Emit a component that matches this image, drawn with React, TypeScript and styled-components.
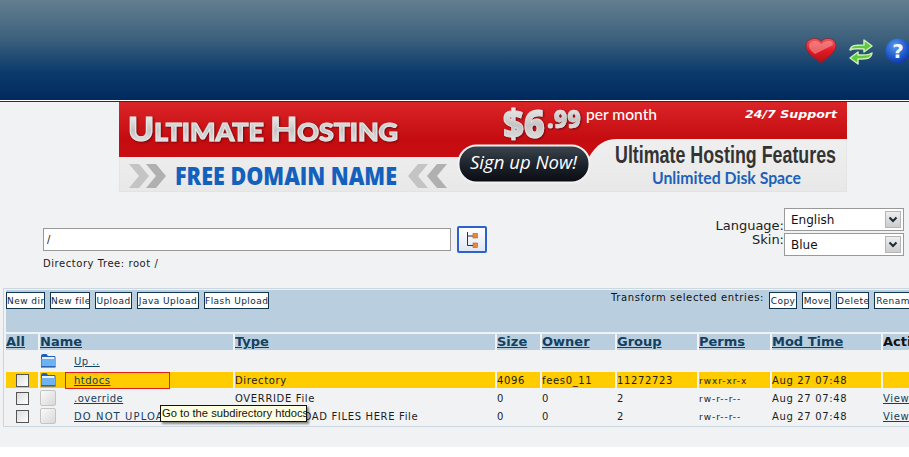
import React from "react";
import styled, { createGlobalStyle } from "styled-components";

const Global = createGlobalStyle`
  html, body { margin: 0; padding: 0; background: #fff; overflow: hidden; }
  body { font-family: "DejaVu Sans", Verdana, sans-serif; font-size: 10px; color: #1a1a1a; }
`;

const Page = styled.div`
  width: 909px;
  height: 447px;
  background: #f1f2f4;
  overflow: hidden;
  position: relative;
`;

const Header = styled.header`
  height: 100px;
  background: linear-gradient(#637f8f 0%, #3b5f7c 40%, #0b3a6c 72%, #002a5e 100%);
  display: flex;
  justify-content: flex-end;
  align-items: flex-start;
  gap: 10px;
  padding-top: 37px;
  box-sizing: border-box;
  margin-right: -2px;
`;

const HeaderRule = styled.div`
  height: 1px;
  background: #fff;
`;

const HeaderShade = styled.div`
  height: 1px;
  background: #17324f;
`;

const BannerSlot = styled.div`
  margin-left: 119px;
  width: 728px;
  height: 90px;
  display: block;
`;

const ToolsRow = styled.section`
  display: flex;
  justify-content: space-between;
  height: 96px;
  padding: 16px 5px 0 43px;
  box-sizing: border-box;
`;

const PathColumn = styled.div`
  padding-top: 18px;
`;

const PathLine = styled.div`
  display: flex;
  align-items: center;
  gap: 6px;
`;

const PathInput = styled.input`
  width: 408px;
  height: 23px;
  box-sizing: border-box;
  border: 1px solid #999;
  background: #fff;
  padding: 0 3px;
  font: 10px "DejaVu Sans", sans-serif;
  color: #111;
`;

const TreeButton = styled.button`
  width: 30px;
  height: 27px;
  padding: 0;
  box-sizing: border-box;
  border: 2px solid #2f62c8;
  border-radius: 2px;
  background: linear-gradient(#fff, #dfe6f5);
  display: flex;
  align-items: center;
  justify-content: center;
`;

const TreePath = styled.div`
  margin-top: 4px;
  font-size: 10px;
  line-height: 13px;
  letter-spacing: 0.55px;
`;

const PrefsGrid = styled.div`
  display: grid;
  grid-template-columns: auto 120px;
  grid-auto-rows: 23px;
  row-gap: 2px;
  align-items: start;
`;

const PrefLabel = styled.label<{ $offset: number }>`
  text-align: right;
  font-size: 13px;
  line-height: 15px;
  color: #222;
  margin-top: ${(p) => p.$offset}px;
`;

const SelectWrap = styled.div`
  position: relative;
  height: 23px;
`;

const Select = styled.select`
  appearance: none;
  width: 100%;
  height: 100%;
  box-sizing: border-box;
  border: 1px solid #999;
  border-radius: 0;
  background: #fff;
  padding: 0 6px;
  font: 12px "DejaVu Sans", sans-serif;
  color: #111;
`;

const SelectArrow = styled.span`
  position: absolute;
  top: 3px;
  right: 3px;
  width: 16px;
  height: 17px;
  box-sizing: border-box;
  border: 1px solid #b5b5b5;
  background: linear-gradient(#eee, #ccc);
  display: flex;
  align-items: center;
  justify-content: center;
`;

const Panel = styled.section`
  width: 960px;
  margin-left: 3px;
  border: 1px solid #ccd6de;
  border-right: 0;
  background: #f1f2f4;
  overflow: hidden;
`;

const FileTable = styled.table`
  table-layout: fixed;
  width: 956px;
  border-collapse: separate;
  border-spacing: 2px;
  margin-top: -1px;
  font-size: 10px;
  letter-spacing: 0.65px;
`;

const ToolbarCell = styled.td`
  background: #b9cfdf;
  height: 42px;
  padding: 0;
  vertical-align: top;
`;

const Toolbar = styled.div`
  display: grid;
  grid-template-columns: 605px auto;
  padding-top: 2px;
`;

const ToolGroup = styled.div`
  display: flex;
  align-items: flex-start;
  gap: 5px;
`;

const TransformLabel = styled.span`
  line-height: 11px;
  white-space: nowrap;
  color: #111;
  letter-spacing: 0.62px;
`;

const ToolButton = styled.button<{ $width: number }>`
  width: ${(p) => p.$width}px;
  height: 17px;
  flex: none;
  box-sizing: border-box;
  padding: 0;
  border: 1px solid #0f3550;
  border-radius: 0;
  background: #fff;
  font: 9px "DejaVu Sans", sans-serif;
  letter-spacing: 0.45px;
  color: #10283a;
  white-space: nowrap;
  overflow: hidden;
`;

const HeadCell = styled.th<{ $link?: boolean }>`
  background: #b9cfdf;
  height: 16px;
  padding: 0;
  text-align: left;
  font-size: 13px;
  line-height: 16px;
  font-weight: bold;
  letter-spacing: 0;
  color: ${(p) => (p.$link ? "#14405f" : "#111")};
  text-decoration: ${(p) => (p.$link ? "underline" : "none")};
  white-space: nowrap;
  overflow: hidden;
`;

const Row = styled.tr<{ $active?: boolean; $height?: number }>`
  height: ${(p) => p.$height ?? 16}px;
  & > td {
    background: ${(p) => (p.$active ? "#ffcc00" : "transparent")};
  }
`;

const Cell = styled.td<{ $small?: boolean }>`
  padding: 2px 0 0;
  line-height: 14px;
  white-space: nowrap;
  color: #1c1c1c;
  font-size: ${(p) => (p.$small ? 9 : 10)}px;
  letter-spacing: ${(p) => (p.$small ? "0.95px" : "inherit")};
`;

const NameCell = styled(Cell)`
  padding: 0;
  line-height: 16px;
`;

const CheckCell = styled(NameCell)`
  padding-left: 10px;
`;

const CheckBox = styled.span`
  display: block;
  box-sizing: border-box;
  width: 13px;
  height: 13px;
  border: 1px solid #555;
  background: linear-gradient(135deg, #dcdcdc, #fff);
  margin-top: 1px;
`;

const NameWrap = styled.div`
  display: flex;
  align-items: center;
  height: 16px;
`;

const IconSlot = styled.span`
  width: 16px;
  height: 16px;
  flex: none;
  display: block;
`;

const FileIcon = styled.span`
  display: block;
  width: 16px;
  height: 16px;
  border: 1px solid #c4c4c4;
  border-radius: 2px;
  background: linear-gradient(135deg, #fafafa, #d8d8d8);
  box-sizing: border-box;
`;

const EntryLink = styled.a<{ $focused?: boolean; $wide?: boolean }>`
  display: block;
  box-sizing: border-box;
  margin-left: ${(p) => (p.$focused ? 9 : 18)}px;
  width: ${(p) => (p.$focused ? "105px" : "auto")};
  height: ${(p) => (p.$focused ? "17px" : "16px")};
  padding-left: ${(p) => (p.$focused ? 8 : 0)}px;
  border: ${(p) => (p.$focused ? "1px solid #e0201c" : "0")};
  line-height: ${(p) => (p.$focused ? "15px" : "18px")};
  color: #14405f;
  text-decoration: underline;
  letter-spacing: ${(p) => (p.$wide ? "1.1px" : "0.5px")};
  position: relative;
  white-space: nowrap;
`;

const ActionLink = styled.a`
  color: #14405f;
  text-decoration: underline;
`;

const Tooltip = styled.div`
  position: absolute;
  left: 160px;
  top: 405px;
  width: 147px;
  height: 17px;
  box-sizing: border-box;
  border: 1px solid #111;
  background: #ffffe1;
  box-shadow: 2px 2px 2px rgba(0, 0, 0, 0.45);
  font: 11.2px/15px "Liberation Sans", sans-serif;
  color: #111;
  padding-left: 1px;
  white-space: nowrap;
  overflow: hidden;
`;

const Heart = () => (
  <svg width="32" height="28" viewBox="0 0 32 28">
    <defs>
      <linearGradient id="heartFill" x1="0" y1="0" x2="0" y2="1">
        <stop offset="0" stopColor="#ee5a5e" />
        <stop offset="0.5" stopColor="#e01a24" />
        <stop offset="1" stopColor="#b00f18" />
      </linearGradient>
    </defs>
    <path d="M16 26 C9 21 1 15 1 9 C1 4 5 1.500 10 1.500 C13 1.500 15 3 16 4.500 C18 2.500 20 1.500 23 1.500 C28 1.500 31 4.500 31 9 C31 15 22 21 16 26Z" fill="url(#heartFill)" stroke="#8c2030" strokeWidth="0.8" />
    <path d="M4 9 C4 5 8 3.500 11 4 C14 4.500 15 6 16 7 C18 5 21 3.500 25 4 C27 4.500 28 6 28 8 L10 17 C6 14 4 12 4 9Z" fill="#f7a0a0" opacity="0.55" />
  </svg>
);

const SyncArrows = () => (
  <svg width="28" height="30" viewBox="0 0 28 30" fill="none">
    <path d="M3 13 C4 8 8 8 17 8 L17 3 L25 9 L17 15 L17 12 C11 12 7 11 3 13Z" fill="#5ec93c" strokeWidth="1.500" stroke="#cdeeb8" strokeLinejoin="round" />
    <path d="M25 16 C24 22 20 22 11 22 L11 27 L3 21 L11 15 L11 18 C17 18 21 19 25 16Z" fill="#5ec93c" strokeWidth="1.500" stroke="#cdeeb8" strokeLinejoin="round" />
  </svg>
);

const HelpBall = () => (
  <svg width="26" height="28" viewBox="0 0 26 28">
    <defs>
      <radialGradient id="helpFill" cx="0.4" cy="0.3" r="0.8">
        <stop offset="0" stopColor="#5a9af0" />
        <stop offset="0.6" stopColor="#1c55c9" />
        <stop offset="1" stopColor="#0c2f94" />
      </radialGradient>
    </defs>
    <circle cx="13" cy="14" r="12.500" fill="url(#helpFill)" />
    <text x="13" y="21" textAnchor="middle" fontFamily="DejaVu Sans" fontWeight="bold" fontSize="20" fill="#f4f8ff">?</text>
  </svg>
);

const BigFolder = () => (
  <svg width="16" height="16" viewBox="0 0 16 16">
    <path d="M1 3 C1 1.800 2 1 3 1 L6.500 1 L8 3 L14 3 C15 3 15.500 3.500 15.500 4.500 L15.500 14 L1 14Z" fill="#1f5fc4" />
    <path d="M1.500 6 L15 6 L15 13.500 L1.500 13.500Z" fill="#6fb2f2" />
    <path d="M2 4 L14.500 4 L14.500 6 L2 6Z" fill="#e7f2fd" />
    <path d="M1 14 L15.500 14" stroke="#14428f" strokeWidth="1" />
  </svg>
);

const TreeGlyph = () => (
  <svg width="16" height="17" viewBox="0 0 16 17" fill="none">
    <path d="M3.500 1 L3.500 14.500 L9 14.500 M3.500 5 L9 5" stroke="#333" strokeWidth="1" />
    <rect x="9" y="2.500" width="4.500" height="4.500" fill="#e8883a" stroke="#b9601c" strokeWidth="0.6" />
    <rect x="9" y="12" width="4.500" height="4.500" fill="#e8883a" stroke="#b9601c" strokeWidth="0.6" />
  </svg>
);

const Chevron = () => (
  <svg width="10" height="7" viewBox="0 0 10 7" fill="none">
    <path d="M1.500 1.500 L5 5 L8.500 1.500" stroke="#1b2b3a" strokeWidth="2" />
  </svg>
);

/* Hosting advertisement shown under the page header */
const HostingAd = () => (
  <svg width="728" height="90" viewBox="0 0 728 90" style={{ display: "block" }}>
    <defs>
      <linearGradient id="adRed" x1="0" y1="0" x2="0" y2="1">
        <stop offset="0" stopColor="#d92428" />
        <stop offset="0.7" stopColor="#c40c10" />
        <stop offset="1" stopColor="#c90d12" />
      </linearGradient>
      <linearGradient id="adSilver" x1="0" y1="0" x2="0" y2="1">
        <stop offset="0" stopColor="#ffffff" />
        <stop offset="0.55" stopColor="#c4c4c4" />
        <stop offset="1" stopColor="#f2f2f2" />
      </linearGradient>
      <linearGradient id="adPill" x1="0" y1="0" x2="0" y2="1">
        <stop offset="0" stopColor="#3d4650" />
        <stop offset="0.5" stopColor="#1e242c" />
        <stop offset="1" stopColor="#090b10" />
      </linearGradient>
      <linearGradient id="adGrey" x1="0" y1="0" x2="0" y2="1">
        <stop offset="0" stopColor="#f4f4f4" />
        <stop offset="1" stopColor="#e8e8e8" />
      </linearGradient>
      <filter id="adShadow" x="-5%" y="-20%" width="110%" height="150%">
        <feDropShadow dx="1" dy="1" stdDeviation="1" floodColor="#5a0608" floodOpacity="0.8" />
      </filter>
    </defs>
    <rect x="0" y="0" width="728" height="90" fill="url(#adGrey)" stroke="#dcdcdc" strokeWidth="0.8" />
    <path d="M0 0 L728 0 L728 37 L498 37 C486 37 478 42 470 55 L0 55Z" fill="url(#adRed)" />
    <g filter="url(#adShadow)">
      <text x="9" y="39" fontFamily="Lato" fontWeight="900" fill="url(#adSilver)" stroke="#e4e4e4" strokeWidth="1.100" textLength="270" lengthAdjust="spacingAndGlyphs">
        <tspan fontSize="32">U</tspan><tspan fontSize="24.5">LTIMATE </tspan><tspan fontSize="32">H</tspan><tspan fontSize="24.5">OSTING</tspan>
      </text>
      <text x="384" y="36" fontFamily="Open Sans" fontWeight="800" fontSize="38" fill="url(#adSilver)" stroke="#e4e4e4" strokeWidth="0.8" textLength="42" lengthAdjust="spacingAndGlyphs">$6</text>
      <text x="428" y="26" fontFamily="Open Sans" fontWeight="800" fontSize="25" fill="url(#adSilver)" stroke="#e4e4e4" strokeWidth="0.4" textLength="34" lengthAdjust="spacingAndGlyphs">.99</text>
    </g>
    <g fill="#c4c4c4">
      <path d="M10 62 L20 62 L30 74 L20 86 L10 86 L20 74Z" />
      <path d="M27 62 L37 62 L47 74 L37 86 L27 86 L37 74Z" fill="#b0b0b0" />
      <path d="M309 62 L299 62 L289 74 L299 86 L309 86 L299 74Z" />
      <path d="M328 62 L318 62 L308 74 L318 86 L328 86 L318 74Z" fill="#b0b0b0" />
    </g>
    <text x="56" y="83" fontFamily="Open Sans" fontWeight="800" fontSize="25" fill="#1460bd" textLength="222" lengthAdjust="spacingAndGlyphs">FREE DOMAIN NAME</text>
    <rect x="339.500" y="43.500" width="131" height="37" rx="18" fill="url(#adPill)" stroke="#f2f2f2" strokeWidth="2" />
    <text x="351" y="67" fontFamily="Open Sans" fontStyle="italic" fontWeight="400" fontSize="19" fill="#fff" textLength="107" lengthAdjust="spacingAndGlyphs">Sign up Now!</text>
    <text x="467" y="18" fontFamily="Lato" fontWeight="500" fontSize="15" fill="#fff" textLength="71" lengthAdjust="spacingAndGlyphs">per month</text>
    <text x="626" y="16" fontFamily="DejaVu Sans" fontStyle="italic" fontWeight="bold" fontSize="11" fill="#fff" textLength="92" lengthAdjust="spacingAndGlyphs">24/7 Support</text>
    <text x="496" y="61" fontFamily="Liberation Sans" fontWeight="bold" fontSize="23" fill="#333" textLength="221" lengthAdjust="spacingAndGlyphs">Ultimate Hosting Features</text>
    <text x="533" y="82" fontFamily="Lato" fontWeight="700" fontSize="17" fill="#1b62b8" textLength="149" lengthAdjust="spacingAndGlyphs">Unlimited Disk Space</text>
  </svg>
);

type Entry = {
  name: string;
  type: string;
  size: string;
  owner: string;
  group: string;
  perms: string;
  view?: boolean;
  folder?: boolean;
  active?: boolean;
  wide?: boolean;
};

const entries: Entry[] = [
  { name: "htdocs", type: "Directory", size: "4096", owner: "fees0_11", group: "11272723", perms: "rwxr-xr-x", folder: true, active: true },
  { name: ".override", type: "OVERRIDE File", size: "0", owner: "0", group: "2", perms: "rw-r--r--", view: true },
  { name: "DO NOT UPLOAD FILES HERE", type: "DO NOT UPLOAD FILES HERE File", size: "0", owner: "0", group: "2", perms: "rw-r--r--", view: true, wide: true },
];

const leftTools: [string, number][] = [
  ["New dir", 39],
  ["New file", 40],
  ["Upload", 37],
  ["Java Upload", 62],
  ["Flash Upload", 65],
];
const rightTools: [string, number][] = [
  ["Copy", 28],
  ["Move", 29],
  ["Delete", 33],
  ["Rename", 44],
];
const columns = ["Size", "Owner", "Group", "Perms", "Mod Time"];

export default function App() {
  return (
    <Page>
      <Global />
      <Header>
        <Heart />
        <SyncArrows />
        <HelpBall />
      </Header>
      <HeaderRule />
      <HeaderShade />
      <BannerSlot>
        <HostingAd />
      </BannerSlot>
      <ToolsRow>
        <PathColumn>
          <PathLine>
            <PathInput defaultValue="/" />
            <TreeButton aria-label="Browse tree">
              <TreeGlyph />
            </TreeButton>
          </PathLine>
          <TreePath>Directory Tree: root /</TreePath>
        </PathColumn>
        <PrefsGrid>
          <PrefLabel $offset={10}>Language:</PrefLabel>
          <SelectWrap>
            <Select defaultValue="English">
              <option>English</option>
            </Select>
            <SelectArrow>
              <Chevron />
            </SelectArrow>
          </SelectWrap>
          <PrefLabel $offset={-1}>Skin:</PrefLabel>
          <SelectWrap>
            <Select defaultValue="Blue">
              <option>Blue</option>
            </Select>
            <SelectArrow>
              <Chevron />
            </SelectArrow>
          </SelectWrap>
        </PrefsGrid>
      </ToolsRow>
      <Panel>
        <FileTable>
          <colgroup>
            <col style={{ width: 32 }} />
            <col style={{ width: 193 }} />
            <col style={{ width: 260 }} />
            <col style={{ width: 43 }} />
            <col style={{ width: 73 }} />
            <col style={{ width: 80 }} />
            <col style={{ width: 71 }} />
            <col style={{ width: 109 }} />
            <col />
          </colgroup>
          <tbody>
            <tr>
              <ToolbarCell colSpan={9}>
                <Toolbar>
                  <ToolGroup>
                    {leftTools.map(([t, w]) => (
                      <ToolButton key={t} $width={w}>{t}</ToolButton>
                    ))}
                  </ToolGroup>
                  <ToolGroup>
                    <TransformLabel>Transform selected entries:</TransformLabel>
                    {rightTools.map(([t, w]) => (
                      <ToolButton key={t} $width={w}>{t}</ToolButton>
                    ))}
                  </ToolGroup>
                </Toolbar>
              </ToolbarCell>
            </tr>
            <tr>
              <HeadCell $link>All</HeadCell>
              <HeadCell $link>Name</HeadCell>
              <HeadCell $link>Type</HeadCell>
              {columns.map((c) => (
                <HeadCell $link key={c}>{c}</HeadCell>
              ))}
              <HeadCell>Actions</HeadCell>
            </tr>
            <Row $height={18}>
              <NameCell />
              <NameCell>
                <NameWrap>
                  <IconSlot>
                    <BigFolder />
                  </IconSlot>
                  <EntryLink>Up ..</EntryLink>
                </NameWrap>
              </NameCell>
              <NameCell colSpan={7} />
            </Row>
            {entries.map((e) => (
              <Row key={e.name} $active={e.active}>
                <CheckCell>
                  <CheckBox />
                </CheckCell>
                <NameCell>
                  <NameWrap>
                    <IconSlot>{e.folder ? <BigFolder /> : <FileIcon />}</IconSlot>
                    <EntryLink $focused={e.active} $wide={e.wide}>{e.name}</EntryLink>
                  </NameWrap>
                </NameCell>
                <Cell>{e.type}</Cell>
                <Cell>{e.size}</Cell>
                <Cell>{e.owner}</Cell>
                <Cell>{e.group}</Cell>
                <Cell $small>{e.perms}</Cell>
                <Cell>Aug 27 07:48</Cell>
                <Cell>{e.view && <ActionLink>View</ActionLink>}</Cell>
              </Row>
            ))}
          </tbody>
        </FileTable>
      </Panel>
      <Tooltip>Go to the subdirectory htdocs</Tooltip>
    </Page>
  );
}
